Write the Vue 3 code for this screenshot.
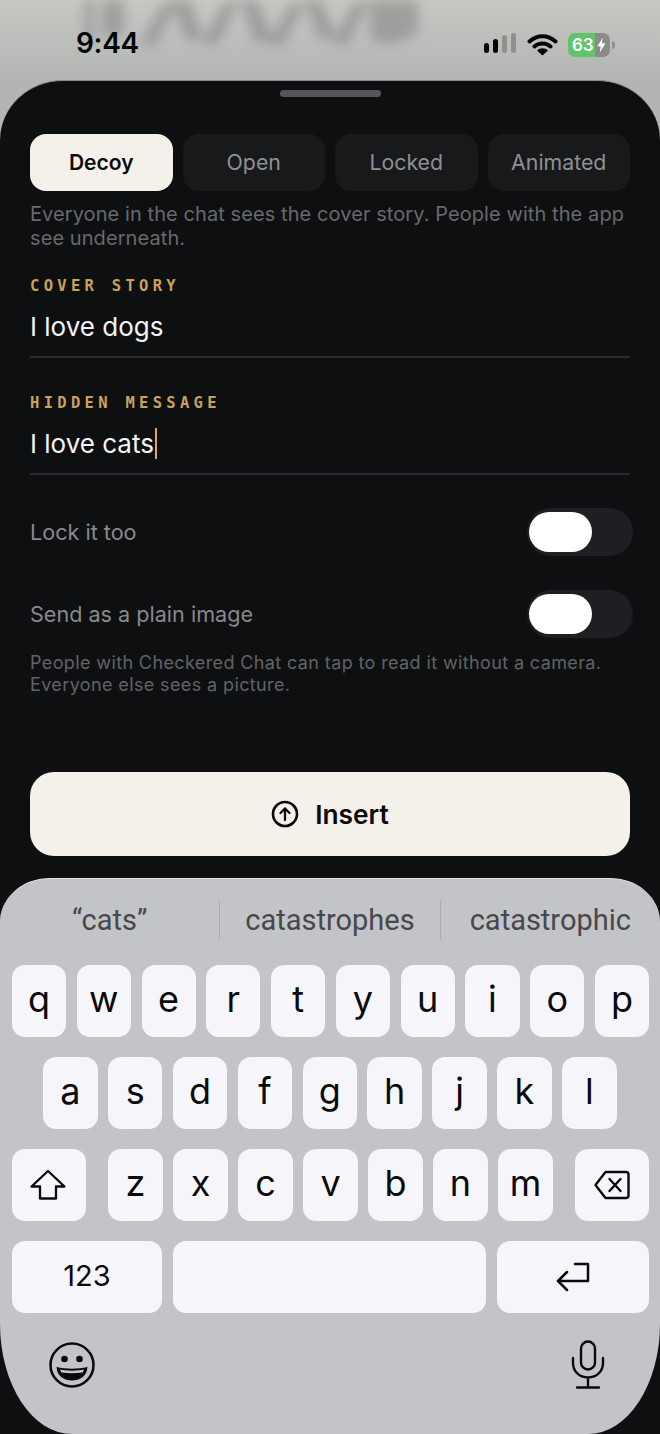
<template>
  <div class="screen">
    <svg class="blur-shape" width="350" height="62" viewBox="0 0 350 62" fill="#7a7d79">
      <rect x="6" y="0" width="10" height="40" />
      <rect x="24" y="0" width="22" height="36" />
      <path d="M62 44L84 4H100L76 46Z" />
      <path d="M92 0H112L126 40H108Z" />
      <path d="M124 42L146 2H162L138 46Z" />
      <path d="M162 0H180L196 42H176Z" />
      <path d="M190 44L212 4H228L204 46Z" />
      <path d="M226 0H244L258 38H240Z" />
      <path d="M254 42L276 2H292L268 46Z" />
      <path d="M292 0H340V32C322 46 300 46 292 38Z" />
    </svg>
    <header class="status">
      <span class="time">9:44</span>
      <div class="status-icons">
        <div class="signal">
          <i class="b1"></i><i class="b2"></i><i class="b3"></i><i class="b4"></i>
        </div>
        <svg class="wifi" width="31" height="23" viewBox="0 0 31 23">
          <path d="M2.5 8.5C10 1.5 21 1.5 28.5 8.5M7.5 13.5C12 9.5 19 9.5 23.5 13.5" fill="none" stroke="#050505" stroke-width="4" stroke-linecap="round" />
          <path d="M15.5 22.5L10 17.5C13 14.6 18 14.6 21 17.5Z" fill="#050505" />
        </svg>
        <div class="battery">
          <div class="battery-body">
            <span class="battery-num">63</span>
            <svg class="bolt" width="9" height="16" viewBox="0 0 11 18"><path d="M7 0L0.5 10.5H4.5L3.5 18L10.5 7H6Z" fill="#fff" /></svg>
          </div>
          <div class="battery-nub"></div>
        </div>
      </div>
    </header>

    <section class="sheet">
      <div class="handle"></div>
      <div class="content">
        <div class="tabs">
          <button v-for="t in tabs" :key="t" class="tab" :class="{ active: t === 'Decoy' }">{{ t }}</button>
        </div>
        <p class="desc">Everyone in the chat sees the cover story. People with the app see underneath.</p>

        <div class="field first">
          <div class="label">COVER STORY</div>
          <div class="value">I love dogs</div>
        </div>
        <div class="field second">
          <div class="label">HIDDEN MESSAGE</div>
          <div class="value">I love cats<span class="caret"></span></div>
        </div>

        <div class="row row-one">
          <span>Lock it too</span>
          <div class="toggle"><div class="knob"></div></div>
        </div>
        <div class="row row-two">
          <span>Send as a plain image</span>
          <div class="toggle"><div class="knob"></div></div>
        </div>
        <p class="note">People with Checkered Chat can tap to read it without a camera.<br />Everyone else sees a picture.</p>

        <button class="insert">
          <svg width="28" height="28" viewBox="0 0 28 28" fill="none" stroke="#0a0a0a" stroke-width="2.6">
            <circle cx="14" cy="14" r="12" />
            <path d="M14 20V8.5M9.5 13L14 8.5L18.500 13" stroke-width="2.300" stroke-linecap="round" stroke-linejoin="round" />
          </svg>
          <span>Insert</span>
        </button>
      </div>

      <div class="keyboard">
        <div class="suggestions">
          <span class="sug">“cats”</span>
          <span class="sep"></span>
          <span class="sug">catastrophes</span>
          <span class="sep"></span>
          <span class="sug">catastrophic</span>
        </div>
        <div class="keys">
          <div class="key-row">
            <div v-for="k in row1" :key="k" class="key">{{ k }}</div>
          </div>
          <div class="key-row inset">
            <div v-for="k in row2" :key="k" class="key">{{ k }}</div>
          </div>
          <div class="key-row third">
            <div class="key shift">
              <svg class="shift-icon" width="36" height="32" viewBox="0 0 36 32" fill="none" stroke="#0a0a0a" stroke-width="2.300" stroke-linejoin="round">
                <path d="M18 2L1.500 17.500H10V29.500H26V17.500H34.500Z" />
              </svg>
            </div>
            <div class="letters">
              <div v-for="k in row3" :key="k" class="key">{{ k }}</div>
            </div>
            <div class="key shift">
              <svg width="36" height="30" viewBox="0 0 36 30" fill="none" stroke="#0a0a0a" stroke-width="2.400" stroke-linejoin="round" stroke-linecap="round">
                <path d="M11.500 2H32C33.500 2 34.500 3 34.500 4.500V25.500C34.500 27 33.500 28 32 28H11.500L1.500 15Z" />
                <path d="M15.500 9L26.500 21M26.500 9L15.500 21" />
              </svg>
            </div>
          </div>
          <div class="key-row">
            <div class="key num">123</div>
            <div class="key space"></div>
            <div class="key ret">
              <svg width="34" height="30" viewBox="0 0 34 30" fill="none" stroke="#0a0a0a" stroke-width="2.500" stroke-linecap="round" stroke-linejoin="round">
                <path d="M19 2H32V19H2M11 10L2 19L11 28" />
              </svg>
            </div>
          </div>
        </div>
        <div class="kb-bottom">
          <svg width="46" height="46" viewBox="0 0 46 46">
            <circle cx="23" cy="23" r="21.500" fill="none" stroke="#0a0a0a" stroke-width="2.500" />
            <circle cx="15.500" cy="17" r="3.300" fill="#0a0a0a" />
            <circle cx="30.500" cy="17" r="3.300" fill="#0a0a0a" />
            <path d="M7.500 25C17 27.300 29 27.300 38.500 25C38 34 31 38.500 23 38.500C15 38.500 8 34 7.500 25Z" fill="#0a0a0a" />
            <path d="M11 27.500C18 29 28 29 35 27.500C34.500 29 34 30 33.500 30.500C27 31.500 19 31.500 12.500 30.500C12 30 11.500 29 11 27.500Z" fill="#c3c4c8" />
          </svg>
          <svg width="34" height="50" viewBox="0 0 34 50" fill="none" stroke="#0a0a0a" stroke-width="2.400" stroke-linecap="round">
            <rect x="10" y="1.500" width="14" height="28" rx="7" />
            <path d="M2 18V23C2 31.500 8.500 37.500 17 37.500C25.500 37.500 32 31.500 32 23V18M17 37.500V47.500M6 47.500H28" />
          </svg>
        </div>
      </div>
    </section>
  </div>
</template>

<script setup>
const tabs = ["Decoy", "Open", "Locked", "Animated"];
const row1 = ["q", "w", "e", "r", "t", "y", "u", "i", "o", "p"];
const row2 = ["a", "s", "d", "f", "g", "h", "j", "k", "l"];
const row3 = ["z", "x", "c", "v", "b", "n", "m"];
</script>

<style>
html,
body {
  margin: 0;
  background: #b8bbb7;
}
</style>

<style scoped>
.screen {
  position: relative;
  width: 660px;
  height: 1434px;
  overflow: hidden;
  display: flex;
  flex-direction: column;
  background: linear-gradient(180deg, #c6c8c4 0%, #b2b5b1 80px);
  font-family: Inter, "Liberation Sans", sans-serif;
}

.blur-shape {
  position: absolute;
  left: 78px;
  top: 0;
  filter: blur(6px);
  opacity: 0.5;
}

.status {
  position: relative;
  height: 80px;
  flex: none;
  display: flex;
  justify-content: space-between;
  padding: 0 45px 0 76px;
  box-sizing: border-box;
}

.time {
  font-size: 28px;
  font-weight: 600;
  line-height: 30px;
  margin-top: 28px;
  letter-spacing: -0.3px;
  color: #050505;
}

.status-icons {
  display: flex;
  align-items: flex-start;
  margin-top: 33px;
}

.signal {
  display: flex;
  align-items: flex-end;
  gap: 4px;
  height: 20px;
  margin-right: 11px;
}

.signal i {
  display: block;
  width: 5px;
  border-radius: 3px;
  background: #050505;
}

.signal .b1 { height: 10px; }
.signal .b2 { height: 14px; }
.signal .b3 { height: 18px; background: #8f918e; }
.signal .b4 { height: 20px; background: #8f918e; }

.wifi {
  margin-right: 10px;
}

.battery {
  display: flex;
  align-items: center;
  height: 24px;
}

.battery-body {
  position: relative;
  width: 42px;
  height: 24px;
  border-radius: 7px;
  background: linear-gradient(90deg, #5fc46c 0 27px, #8b8c8a 27px);
  color: #fff;
  overflow: hidden;
}

.battery-num {
  position: absolute;
  left: 4px;
  top: 0;
  font-size: 17px;
  line-height: 24px;
  font-weight: 600;
}

.bolt {
  position: absolute;
  left: 29px;
  top: 4px;
}

.battery-nub {
  width: 3px;
  height: 8px;
  margin-left: 2px;
  border-radius: 0 3px 3px 0;
  background: #8f918e;
}

.sheet {
  flex: 1;
  position: relative;
  background: #0e0f11;
  border-radius: 63px 63px 0 0 / 60px 60px 0 0;
  border-top: 1px solid #8a8c8a;
  box-sizing: border-box;
  display: flex;
  flex-direction: column;
}

.handle {
  width: 101px;
  height: 7px;
  margin: 9px auto 0;
  border-radius: 4px;
  background: #55565a;
}

.content {
  padding: 37px 30px 0;
}

.tabs {
  display: grid;
  grid-template-columns: repeat(4, 1fr);
  gap: 10px;
}

.tab {
  height: 57px;
  border: none;
  border-radius: 16px;
  padding: 0 0 1px;
  background: #18191b;
  color: #8f9093;
  font-family: inherit;
  font-size: 21.3px;
}

.tab.active {
  background: #f3f1e9;
  color: #0c0c0c;
  font-weight: 600;
  font-size: 21px;
  padding: 0;
}

.desc {
  margin: 11px 0 0;
  font-size: 20px;
  line-height: 24px;
  letter-spacing: 0.08px;
  color: #68696c;
}

.field {
  border-bottom: 2px solid #2b2c2f;
}

.field.first {
  margin-top: 26px;
  height: 80px;
}

.field.second {
  margin-top: 35px;
  height: 80px;
}

.label {
  font-family: "DejaVu Sans Mono", monospace;
  font-size: 15.5px;
  line-height: 20px;
  font-weight: 700;
  letter-spacing: 4.300px;
  color: #c9a35c;
}

.value {
  margin-top: 14px;
  height: 34px;
  font-size: 26px;
  line-height: 34px;
  color: #f4f4f4;
}

.caret {
  display: inline-block;
  width: 2.500px;
  height: 31px;
  margin-left: 1px;
  vertical-align: -6px;
  background: #d9a95e;
}

.row {
  display: flex;
  justify-content: space-between;
  align-items: center;
  margin-right: -3px;
  height: 48px;
  font-size: 21.6px;
  color: #88898c;
}

.row-one {
  margin-top: 33px;
}

.row-two {
  margin-top: 34px;
}

.toggle {
  width: 106px;
  height: 48px;
  border-radius: 24px;
  background: #1e1f22;
  box-sizing: border-box;
  padding: 4px 0 0 2px;
}

.knob {
  width: 63px;
  height: 40px;
  border-radius: 20px;
  background: #fff;
}

.note {
  margin: 14px 0 0;
  font-size: 18px;
  line-height: 22px;
  letter-spacing: 0.38px;
  color: #626366;
}

.insert {
  display: flex;
  align-items: center;
  justify-content: center;
  gap: 16px;
  width: 100%;
  height: 84px;
  margin-top: 76px;
  border: none;
  border-radius: 24px;
  background: #f3f1e9;
  color: #0a0a0a;
  font-family: inherit;
  font-size: 26.3px;
  font-weight: 600;
}

.keyboard {
  position: absolute;
  left: 0;
  right: 0;
  top: 797px;
  bottom: 0;
  background: #c3c4c8;
  border-radius: 50px 50px 72px 72px / 44px 44px 110px 110px;
  border-top: 1px solid #e4e5e7;
  box-sizing: border-box;
}

.suggestions {
  display: flex;
  align-items: center;
  height: 86px;
  padding-bottom: 4px;
  box-sizing: border-box;
}

.sug {
  flex: 1;
  text-align: center;
  font-family: Roboto, "Liberation Sans", sans-serif;
  font-size: 29px;
  color: #47484c;
  white-space: nowrap;
}

.sep {
  width: 1px;
  height: 40px;
  background: #adaeb2;
}

.keys {
  display: flex;
  flex-direction: column;
  gap: 20px;
  padding: 0 11px 0 12px;
}

.key-row {
  display: flex;
  gap: 10.600px;
  height: 72px;
}

.key-row.inset {
  padding: 0 31px;
  gap: 10.400px;
}

.key-row.inset .key,
.letters .key {
  flex: none;
  width: 54.500px;
}

.key {
  flex: 1;
  display: flex;
  align-items: center;
  justify-content: center;
  border-radius: 13px;
  background: #f6f6fa;
  color: #0a0a0a;
  font-family: Inter, "Liberation Sans", sans-serif;
  font-size: 36px;
  line-height: 1;
  padding-bottom: 5px;
  box-sizing: border-box;
}

.key-row.third {
  justify-content: space-between;
}

.letters {
  display: flex;
  gap: 10.500px;
}

.key.shift {
  flex: none;
  width: 74px;
  padding-bottom: 0;
}

.shift-icon {
  margin-right: 3px;
}

.key.num {
  flex: none;
  width: 150px;
  font-size: 29px;
  padding-bottom: 3px;
}

.key.ret {
  flex: none;
  width: 152px;
  padding-bottom: 0;
}

.kb-bottom {
  display: flex;
  justify-content: space-between;
  align-items: center;
  padding: 0 55px 0 49px;
  margin-top: 27px;
}
</style>
